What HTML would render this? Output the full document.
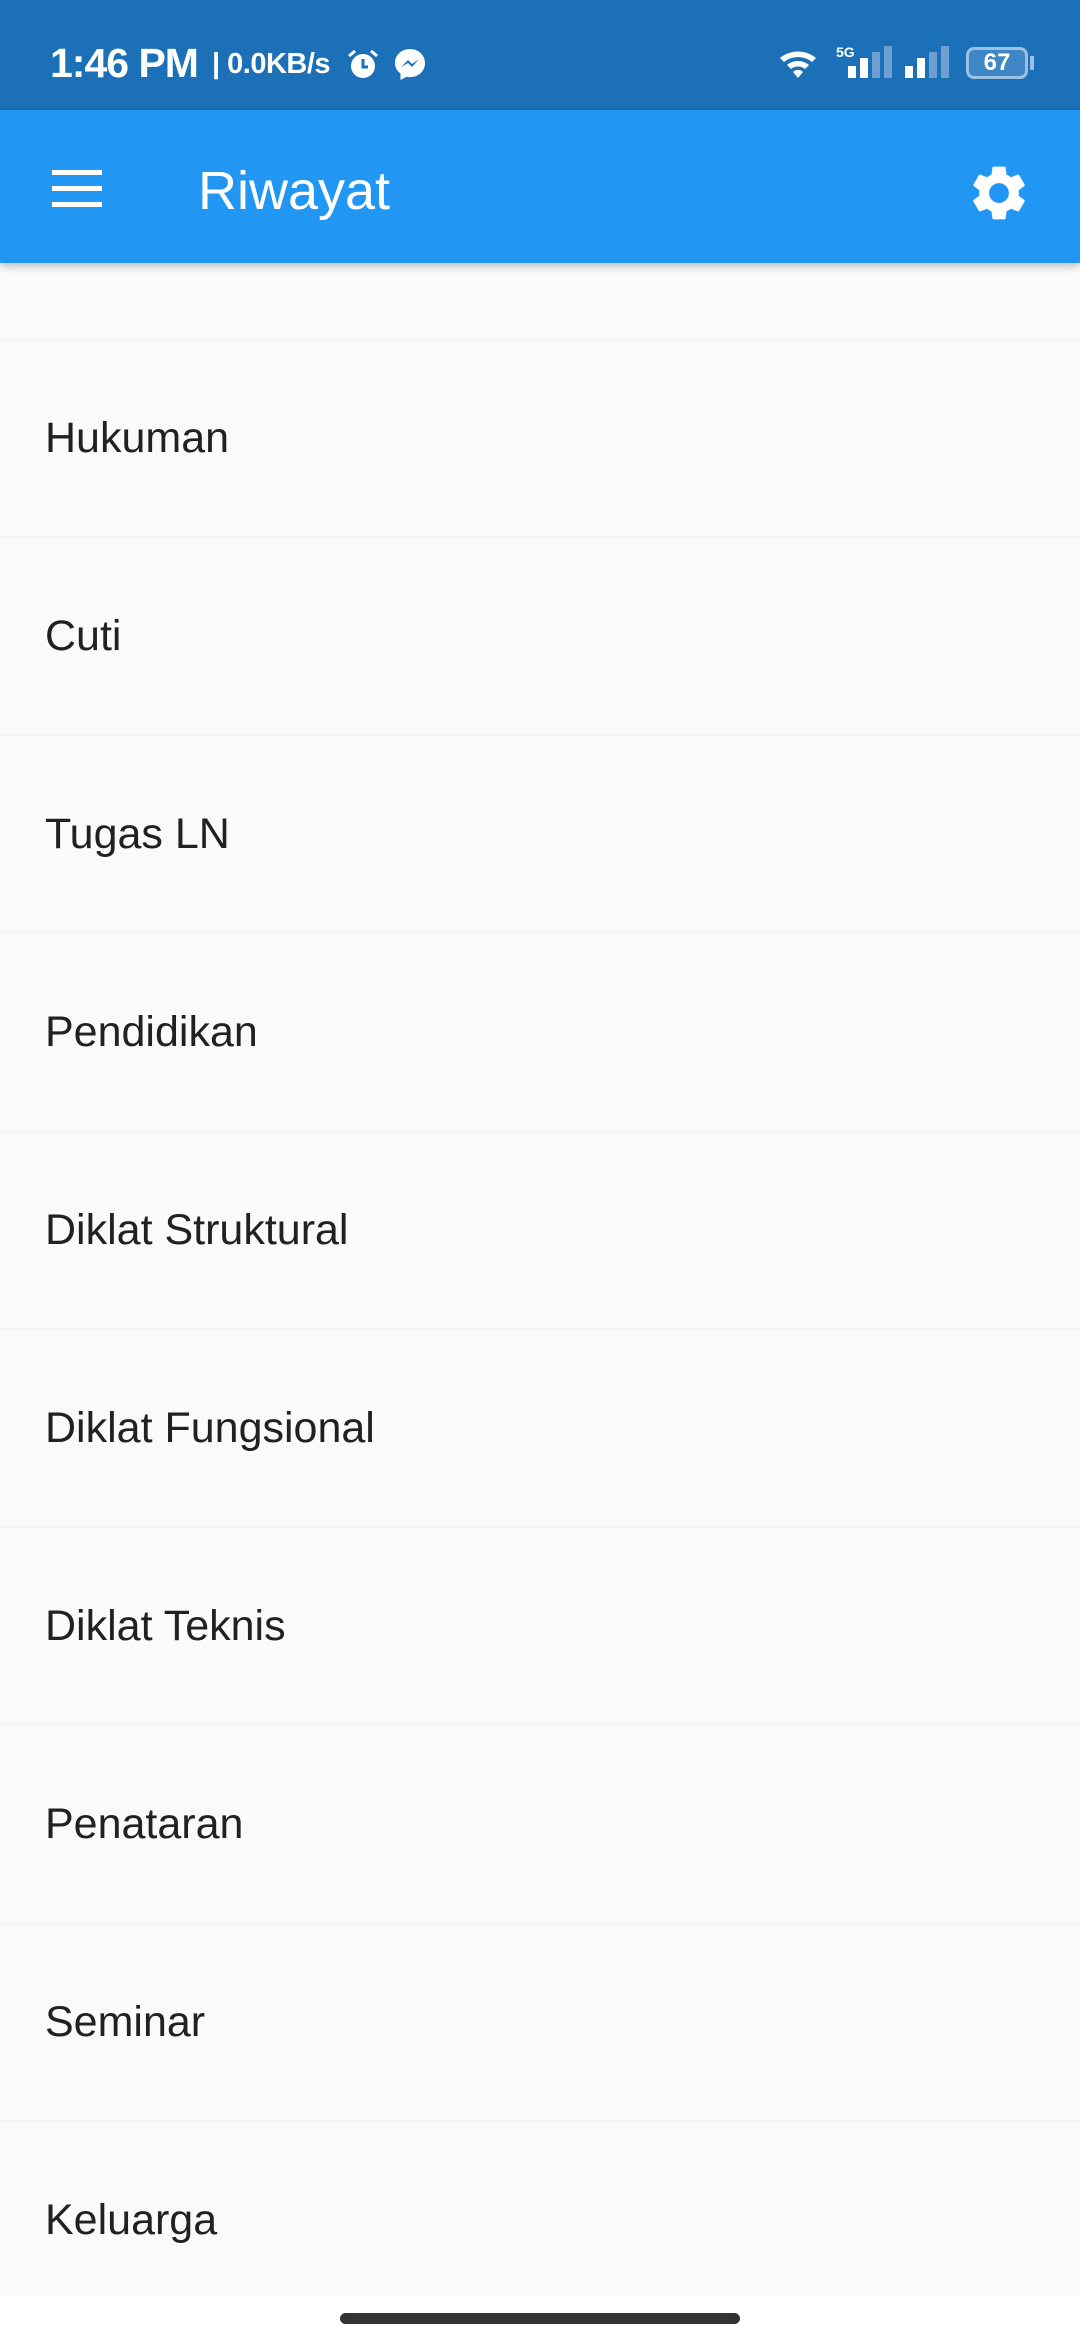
<!DOCTYPE html>
<html><head><meta charset="utf-8"><style>
*{margin:0;padding:0;box-sizing:border-box}
body{width:1080px;height:2340px;background:#fafafa;font-family:"Liberation Sans",sans-serif;position:relative;overflow:hidden}
.sb{position:absolute;top:0;left:0;width:1080px;height:110px;background:#1b70b8;color:#fff}
.ab{position:absolute;top:110px;left:0;width:1080px;height:153px;background:#2196f3;box-shadow:0 3px 8px rgba(0,0,0,.25);z-index:2}
.row{position:absolute;left:0;width:1080px;height:198px;border-top:2px solid #f5f5f5;font-size:43px;color:#212121;padding-left:45px;line-height:196px}
.nav{position:absolute;top:2296px;left:0;width:1080px;height:44px;background:#fff}
</style></head><body>
<div class="sb">
<div style="position:absolute;left:50px;top:40px;font-size:41px;font-weight:bold;letter-spacing:-1px">1:46 PM</div>
<div style="position:absolute;left:212px;top:48px;font-size:29px;font-weight:bold;letter-spacing:-0.5px">| 0.0KB/s</div>
<svg style="position:absolute;left:346px;top:48px" width="34" height="34" viewBox="0 0 34 34"><circle cx="17" cy="18" r="12" fill="#fff"/><path d="M17 11v8h5" stroke="#1b70b8" stroke-width="3" fill="none"/><path d="M3 8l6-5M31 8l-6-5" stroke="#fff" stroke-width="3"/></svg>
<svg style="position:absolute;left:393px;top:47px" width="34" height="36" viewBox="0 0 34 36"><path d="M17 2C8 2 2 8.5 2 16c0 4.5 2 8 5.5 10.5V33l6-3.3c1.1.3 2.3.4 3.5.4 9 0 15-6.5 15-14S26 2 17 2z" fill="#fff"/><path d="M8 20l7-7 4 4 7-5-7 8-4-4z" fill="#1b70b8"/></svg>
<svg style="position:absolute;left:778px;top:46px" width="44" height="34" viewBox="0 0 44 34"><path d="M2 12a28 28 0 0 1 36 0l-4 4a22 22 0 0 0-28 0zM9 19a17 17 0 0 1 22 0l-4 4a11 11 0 0 0-14 0zM15 26a7 7 0 0 1 10 0l-5 6z" fill="#fff"/></svg>
<div style="position:absolute;left:836px;top:44px;font-size:14px;font-weight:bold">5G</div>
<div style="position:absolute;left:848px;top:66px;width:8px;height:12px;background:#fff"></div>
<div style="position:absolute;left:860px;top:58px;width:8px;height:20px;background:#fff"></div>
<div style="position:absolute;left:872px;top:52px;width:8px;height:26px;background:#6d9fd0"></div>
<div style="position:absolute;left:884px;top:46px;width:8px;height:32px;background:#6d9fd0"></div>
<div style="position:absolute;left:905px;top:66px;width:8px;height:12px;background:#fff"></div>
<div style="position:absolute;left:917px;top:58px;width:8px;height:20px;background:#fff"></div>
<div style="position:absolute;left:929px;top:52px;width:8px;height:26px;background:#6d9fd0"></div>
<div style="position:absolute;left:941px;top:46px;width:8px;height:32px;background:#6d9fd0"></div>
<div style="position:absolute;left:966px;top:47px;width:62px;height:32px;border:3px solid #9cc0e4;border-radius:8px;font-size:24px;font-weight:bold;text-align:center;line-height:26px;background:#3f86c6">67</div>
<div style="position:absolute;left:1030px;top:56px;width:4px;height:14px;background:#9cc0e4"></div>
</div>
<div class="ab">
<div style="position:absolute;left:52px;top:60px;width:50px;height:5px;background:#fff"></div>
<div style="position:absolute;left:52px;top:76px;width:50px;height:5px;background:#fff"></div>
<div style="position:absolute;left:52px;top:92px;width:50px;height:5px;background:#fff"></div>
<div style="position:absolute;left:198px;top:50px;font-size:54px;color:#fff;font-weight:500">Riwayat</div>
<svg style="position:absolute;left:966px;top:50px" width="66" height="66" viewBox="0 0 24 24"><path fill="#fff" d="M19.14 12.94c.04-.3.06-.61.06-.94 0-.32-.02-.64-.07-.94l2.03-1.580a.49.49 0 0 0 .12-.61l-1.92-3.32a.488.488 0 0 0-.59-.22l-2.39.96c-.5-.38-1.030-.7-1.62-.94l-.36-2.54a.484.484 0 0 0-.48-.41h-3.84c-.24 0-.43.17-.47.41l-.36 2.54c-.59.24-1.13.57-1.62.94l-2.39-.96c-.22-.08-.47 0-.59.22L2.74 8.87c-.12.21-.08.47.12.61l2.03 1.58c-.05.3-.09.63-.09.94s.02.64.07.94l-2.03 1.58a.49.49 0 0 0-.12.61l1.92 3.32c.12.22.37.29.59.22l2.39-.96c.5.38 1.03.7 1.62.94l.36 2.54c.05.24.24.41.48.41h3.84c.24 0 .44-.17.47-.41l.36-2.54c.59-.24 1.13-.56 1.62-.94l2.39.96c.22.08.47 0 .59-.22l1.92-3.32c.12-.22.07-.47-.12-.61l-2.01-1.58zM12 15.6c-1.98 0-3.6-1.62-3.6-3.6s1.62-3.6 3.6-3.6 3.6 1.62 3.6 3.6-1.62 3.6-3.6 3.6z"/></svg>
</div>
<div class="row" style="top:338px">Hukuman</div>
<div class="row" style="top:536px">Cuti</div>
<div class="row" style="top:734px">Tugas LN</div>
<div class="row" style="top:932px">Pendidikan</div>
<div class="row" style="top:1130px">Diklat Struktural</div>
<div class="row" style="top:1328px">Diklat Fungsional</div>
<div class="row" style="top:1526px">Diklat Teknis</div>
<div class="row" style="top:1724px">Penataran</div>
<div class="row" style="top:1922px">Seminar</div>
<div class="row" style="top:2120px">Keluarga</div>
<div class="nav"><div style="position:absolute;left:340px;top:17px;width:400px;height:11px;border-radius:6px;background:#333"></div></div>
</body></html>
